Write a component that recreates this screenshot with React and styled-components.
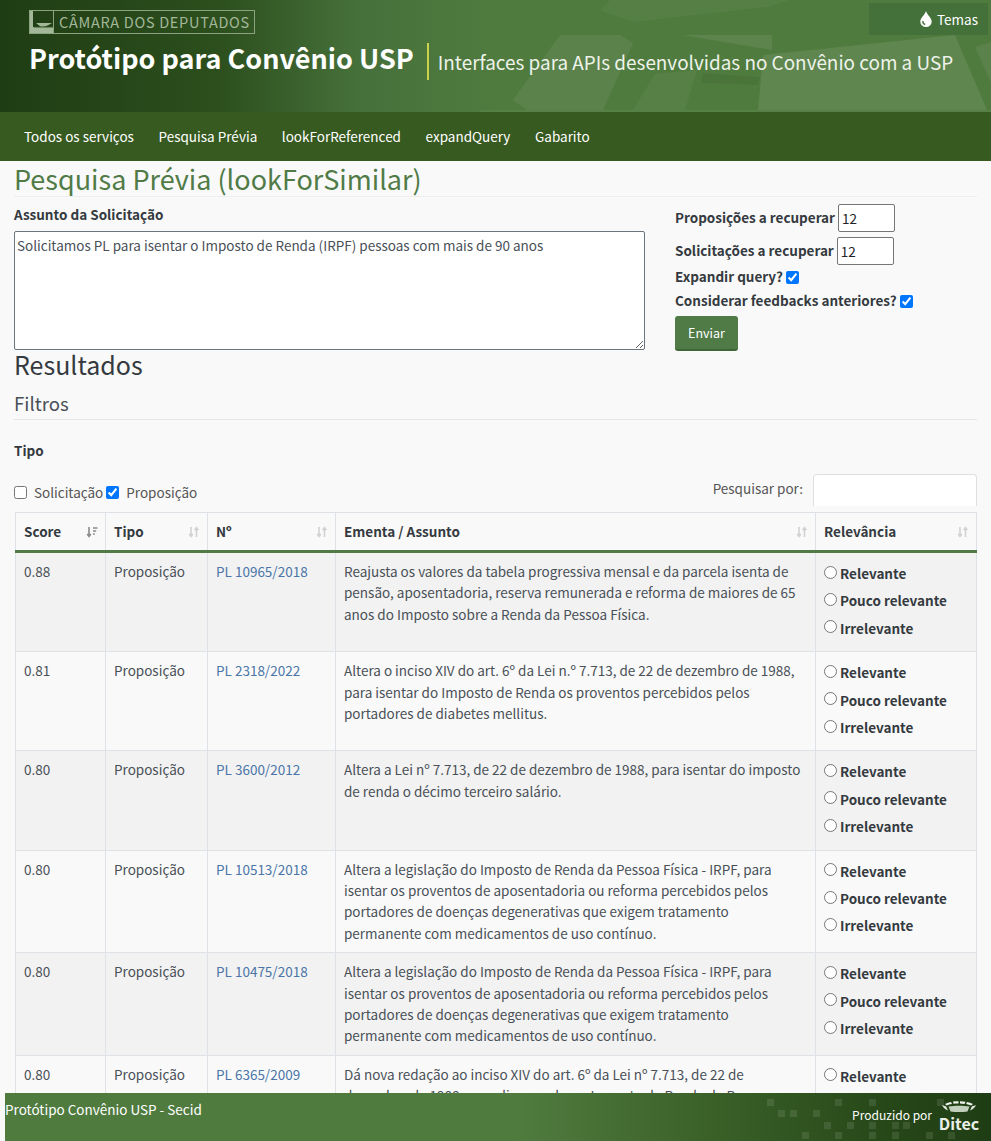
import React from 'react'
import styled, { createGlobalStyle } from 'styled-components'

const FONT = `"Noto Sans CJK SC", "Source Sans Pro", "Noto Sans", sans-serif`

const rows = [
  {
    score: '0.88',
    numero: 'PL 10965/2018',
    ementa:
      'Reajusta os valores da tabela progressiva mensal e da parcela isenta de pensão, aposentadoria, reserva remunerada e reforma de maiores de 65 anos do Imposto sobre a Renda da Pessoa Física.',
  },
  {
    score: '0.81',
    numero: 'PL 2318/2022',
    ementa:
      'Altera o inciso XIV do art. 6º da Lei n.º 7.713, de 22 de dezembro de 1988, para isentar do Imposto de Renda os proventos percebidos pelos portadores de diabetes mellitus.',
  },
  {
    score: '0.80',
    numero: 'PL 3600/2012',
    ementa:
      'Altera a Lei nº 7.713, de 22 de dezembro de 1988, para isentar do imposto de renda o décimo terceiro salário.',
  },
  {
    score: '0.80',
    numero: 'PL 10513/2018',
    ementa:
      'Altera a legislação do Imposto de Renda da Pessoa Física - IRPF, para isentar os proventos de aposentadoria ou reforma percebidos pelos portadores de doenças degenerativas que exigem tratamento permanente com medicamentos de uso contínuo.',
  },
  {
    score: '0.80',
    numero: 'PL 10475/2018',
    ementa:
      'Altera a legislação do Imposto de Renda da Pessoa Física - IRPF, para isentar os proventos de aposentadoria ou reforma percebidos pelos portadores de doenças degenerativas que exigem tratamento permanente com medicamentos de uso contínuo.',
  },
  {
    score: '0.80',
    numero: 'PL 6365/2009',
    ementa:
      'Dá nova redação ao inciso XIV do art. 6º da Lei nº 7.713, de 22 de dezembro de 1988, para dispor sobre o Imposto de Renda da Pessoa Física.',
  },
]

const navItems = ['Todos os serviços', 'Pesquisa Prévia', 'lookForReferenced', 'expandQuery', 'Gabarito']
const relevancias = ['Relevante', 'Pouco relevante', 'Irrelevante']

const footerSquares = [
  [767, 6], [835, 6], [869, 6], [937, 6],
  [778, 17], [790, 17], [813, 17],
  [824, 29], [847, 29], [869, 29], [892, 29], [903, 29],
  [802, 39], [835, 39], [869, 39], [892, 39], [926, 39], [948, 39],
]

const SortIcon = ({ active }) => (
  <StSort viewBox="0 0 12 12" aria-hidden="true">
    <path d="M3 1v9M1.200 8l1.800 2.400L4.800 8" fill="none" stroke={active ? '#8a8a8a' : '#d2d2d2'} strokeWidth="1.600" />
    {active ? (
      <path d="M7 2h4.500M7 5h3.200M7 8h1.800" fill="none" stroke="#8a8a8a" strokeWidth="1.600" />
    ) : (
      <path d="M8.500 11V2M6.700 4l1.800-2.400L10.300 4" fill="none" stroke="#d2d2d2" strokeWidth="1.600" />
    )}
  </StSort>
)

const HeaderShapes = () => (
  <StShapes viewBox="0 0 991 112" preserveAspectRatio="none" aria-hidden="true">
    <g fill="#fff">
      <path fillOpacity="0.035" d="M610 0h180l-23 7-134 15-33-12z" />
      <path fillOpacity="0.06" d="M513 100l47-65h60l13 8-30 67H527z" />
      <path fillOpacity="0.04" d="M633 110l22-36 42-4-12 40z" />
      <path fillOpacity="0.07" d="M682 35h90v15z" />
      <path fillOpacity="0.085" d="M763 55l192-20 32 75H758z" />
      <path fillOpacity="0.06" d="M975 47l16-5v41z" />
      <path fillOpacity="0.04" d="M480 110h511v2H480z" />
    </g>
    <path fill="#000" fillOpacity="0.05" d="M703 73l57 4-2 8-57-2z" />
  </StShapes>
)

const App = () => {
  return (
    <>
      <GlobalStyle />
      <StHeader>
        <HeaderShapes />
        <StLogo>
          <svg width="25" height="24" viewBox="0 0 25 24" aria-hidden="true">
            <path d="M0.500 0.500h24v23H0.500z" fill="none" stroke="#8ba480" />
            <path d="M1 1h3v16h20v6H1z" fill="#a3b799" />
            <path d="M7 13l16 0c-3 2-7 4-11 4z" fill="#a3b799" />
            <path d="M5 17h19" stroke="#2f5222" strokeWidth="1" />
          </svg>
          <span>CÂMARA DOS DEPUTADOS</span>
        </StLogo>
        <StTitleRow>
          <StTitle>Protótipo para Convênio USP</StTitle>
          <StSubtitle>Interfaces para APIs desenvolvidas no Convênio com a USP</StSubtitle>
        </StTitleRow>
        <StThemes>
          <svg width="12" height="16" viewBox="0 0 12 16" aria-hidden="true">
            <path d="M6 0C5.200 3.400.3 7 .3 10.500A5.700 5.500 0 0 0 11.700 10.500C11.700 7 6.800 3.400 6 0z" fill="#fff" />
            <path d="M3 10c-.4 1.900.6 3.100 2.200 3.500" fill="none" stroke="#44703a" strokeWidth="1.400" />
          </svg>
          Temas
        </StThemes>
      </StHeader>

      <StNav>
        {navItems.map((item) => (
          <StNavLink key={item}>{item}</StNavLink>
        ))}
      </StNav>

      <StMain>
        <StPageTitle>Pesquisa Prévia (lookForSimilar)</StPageTitle>
        <StFormRow>
          <StSubject>
            <StBold>Assunto da Solicitação</StBold>
            <StTextarea defaultValue="Solicitamos PL para isentar o Imposto de Renda (IRPF) pessoas com mais de 90 anos" />
          </StSubject>
          <StOptions>
            <StOption>
              <StBold>Proposições a recuperar</StBold>
              <StNumber type="number" defaultValue="12" />
            </StOption>
            <StOption>
              <StBold>Solicitações a recuperar</StBold>
              <StNumber type="number" defaultValue="12" />
            </StOption>
            <StCheckOption>
              <StBold>Expandir query?</StBold>
              <StCheck type="checkbox" defaultChecked />
            </StCheckOption>
            <StCheckOption>
              <StBold>Considerar feedbacks anteriores?</StBold>
              <StCheck type="checkbox" defaultChecked />
            </StCheckOption>
            <StButton>Enviar</StButton>
          </StOptions>
        </StFormRow>

        <StResults>Resultados</StResults>
        <StFilters>Filtros</StFilters>
        <StTipo>Tipo</StTipo>

        <StToolbar>
          <StTipoChecks>
            <StCheckBig type="checkbox" />
            <span>Solicitação</span>
            <StCheckBig type="checkbox" defaultChecked />
            <span>Proposição</span>
          </StTipoChecks>
          <StSearch>
            <span>Pesquisar por:</span>
            <StSearchInput type="text" />
          </StSearch>
        </StToolbar>

        <StTable>
          <colgroup>
            <col style={{ width: 90 }} />
            <col style={{ width: 102 }} />
            <col style={{ width: 128 }} />
            <col style={{ width: 480 }} />
            <col style={{ width: 161 }} />
          </colgroup>
          <thead>
            <tr>
              <StTh>Score<SortIcon active /></StTh>
              <StTh>Tipo<SortIcon /></StTh>
              <StTh>Nº<SortIcon /></StTh>
              <StTh>Ementa / Assunto<SortIcon /></StTh>
              <StTh>Relevância<SortIcon /></StTh>
            </tr>
          </thead>
          <tbody>
            {rows.map((row) => (
              <StRow key={row.numero}>
                <StTd>{row.score}</StTd>
                <StTd>Proposição</StTd>
                <StTd><StLink>{row.numero}</StLink></StTd>
                <StTd>{row.ementa}</StTd>
                <StTd>
                  <StRadioList>
                    {relevancias.map((r) => (
                      <StRadioLine key={r}>
                        <StRadio type="radio" name={row.numero} />
                        {r}
                      </StRadioLine>
                    ))}
                  </StRadioList>
                </StTd>
              </StRow>
            ))}
          </tbody>
        </StTable>
      </StMain>

      <StFooter>
        <StSquares viewBox="5 0 986 48" aria-hidden="true">
          {footerSquares.map(([x, y]) => (
            <rect key={`${x}-${y}`} x={x} y={y} width="7" height="7" />
          ))}
        </StSquares>
        <StFooterText>Protótipo Convênio USP - Secid</StFooterText>
        <StFooterRight>
          <StProduced>Produzido por</StProduced>
          <StDitec>
            <svg width="34" height="13" viewBox="0 0 34 12" aria-hidden="true">
              <path d="M3 3.500C5 2.500 7 1.800 9 1.400l1 2.100C8 3.800 6 4.300 4.800 5zM11 1.100c2-.2 4-.3 5.500-.3v2.200c-1.800 0-3.500 0-5 .2zM18 .8c2 0 4 .2 5.500.5l-1 2.200c-1.400-.3-3-.4-4.500-.5zM25 1.600c2 .4 4 1 6 2L29.200 5c-1.500-.6-3-1-5-1.400z" fill="#f0f4ee" />
              <path d="M0 4.500C1 5 2.500 5.400 4 5.800L6 10c-3-1.200-5-3-6-5.500zM34 4.500c-1 2.500-3 4.300-6 5.500l2-4.200c1.500-.4 3-.8 4-1.300z" fill="#dfe6db" />
              <path d="M6.500 6c6-1 15-1 21 0l-2 5c-5 .8-12 .8-17 0z" fill="#c3cfbd" />
            </svg>
            <span>Ditec</span>
          </StDitec>
        </StFooterRight>
      </StFooter>
    </>
  )
}

export default App

const GlobalStyle = createGlobalStyle`
  * { box-sizing: border-box; }
  html, body { height: 1141px; overflow: hidden; }
  body {
    margin: 0;
    background: #f9f9f9;
    color: #212529;
    font-family: ${FONT};
    font-size: 13.500px;
    line-height: 22px;
  }
`

const StHeader = styled.header`
  position: relative;
  height: 112px;
  padding: 10px 0 0 29px;
  overflow: hidden;
  background: linear-gradient(90deg, #1f3d14 0%, #2c4f1d 22%, #46703a 36%, #507b3f 50%, #507b3f 100%);
`

const StShapes = styled.svg`
  position: absolute;
  inset: 0;
  width: 100%;
  height: 100%;
`

const StLogo = styled.div`
  position: relative;
  display: flex;
  align-items: center;
  width: 226px;
  height: 24px;
  border: 1px solid #8ba480;
  color: #a3b799;
  font-size: 14.500px;
  letter-spacing: 0.700px;
  line-height: 22px;
  white-space: nowrap;

  svg {
    margin: -1px 5px -1px -1px;
    flex: none;
  }
`

const StTitleRow = styled.div`
  position: relative;
  display: flex;
  align-items: center;
  margin-top: 9px;
  height: 37px;
  white-space: nowrap;
  color: #fff;
`

const StTitle = styled.h1`
  margin: 0 0 7px;
  padding-right: 13px;
  font-size: 27px;
  font-weight: 700;
  line-height: 34px;
`

const StSubtitle = styled.div`
  display: flex;
  align-items: center;
  height: 37px;
  padding-left: 9px;
  border-left: 2px solid #c8d24a;
  font-size: 18.900px;
  line-height: 37px;
  color: #eef3ea;
`

const StThemes = styled.div`
  position: absolute;
  top: 3px;
  right: 3px;
  width: 119px;
  height: 32px;
  display: flex;
  align-items: center;
  justify-content: flex-end;
  gap: 5px;
  padding-right: 10px;
  background: #44703a;
  color: #fff;
  font-size: 13.500px;
`

const StNav = styled.nav`
  display: flex;
  align-items: center;
  height: 49px;
  padding: 0 0 2px 24px;
  gap: 24.600px;
  background: #375a20;
`

const StNavLink = styled.a`
  color: #fff;
  font-size: 13.500px;
  line-height: 22px;
`

const StMain = styled.main`
  padding: 0 14px;
`

const StPageTitle = styled.h2`
  margin: 0 0 7px;
  height: 36px;
  border-bottom: 1px solid #eeeeee;
  color: #507b47;
  font-size: 27px;
  font-weight: 400;
  line-height: 35px;
`

const StFormRow = styled.div`
  display: grid;
  grid-template-columns: 631px 1fr;
  column-gap: 30px;
`

const StSubject = styled.div`
  display: flex;
  flex-direction: column;
`

const StBold = styled.span`
  display: block;
  padding-bottom: 2px;
  font-weight: 700;
  font-size: 13.500px;
  line-height: 20px;
  color: #343a40;
`

const StTextarea = styled.textarea`
  width: 631px;
  height: 119px;
  margin-top: 5px;
  padding: 2px;
  border: 1px solid #6c757d;
  border-radius: 2px;
  background: #fff;
  color: #495057;
  font-family: ${FONT};
  font-size: 13.500px;
  line-height: 22px;
`

const StOptions = styled.div`
  display: flex;
  flex-direction: column;
  align-items: flex-start;
`

const StOption = styled.label`
  display: flex;
  align-items: center;
  gap: 3px;
  height: 28px;
  white-space: nowrap;

  & + & {
    margin-top: 5px;
  }
`

const StCheckOption = styled.label`
  display: flex;
  align-items: center;
  gap: 3px;
  height: 24px;
  white-space: nowrap;
`

const StNumber = styled.input`
  width: 57px;
  height: 28px;
  padding: 1px 3px;
  border: 1px solid #767676;
  border-radius: 2px;
  background: #fff;
  color: #212529;
  font-family: ${FONT};
  font-size: 13.500px;
  appearance: textfield;
`

const StCheck = styled.input`
  width: 13px;
  height: 13px;
  margin: 0;
  accent-color: #0075ff;
`

const StButton = styled.button`
  margin-top: 3px;
  width: 63px;
  height: 35px;
  border: none;
  border-bottom: 2px solid #3f6637;
  border-radius: 3px;
  background: #507b47;
  color: #fff;
  font-family: ${FONT};
  font-size: 12.500px;
`

const StResults = styled.h3`
  margin: 0;
  height: 30px;
  font-size: 25px;
  font-weight: 400;
  line-height: 26px;
  color: #343a40;
`

const StFilters = styled.h4`
  margin: 9px 0 0;
  height: 30px;
  border-bottom: 1px solid #e5e5e5;
  font-size: 18.600px;
  font-weight: 400;
  line-height: 26px;
  color: #495057;
`

const StTipo = styled.div`
  margin-top: 19px;
  font-weight: 700;
  line-height: 22px;
  color: #343a40;
`

const StToolbar = styled.div`
  display: flex;
  align-items: flex-start;
  justify-content: space-between;
  height: 39px;
  margin-top: 12px;
`

const StTipoChecks = styled.div`
  display: flex;
  align-items: center;
  height: 22px;
  margin-top: 8px;
  color: #555;

  span {
    margin-right: 3px;
  }
`

const StCheckBig = styled.input`
  width: 13px;
  height: 13px;
  margin: 0 7px 0 0;
  accent-color: #0075ff;
`

const StSearch = styled.div`
  display: flex;
  align-items: flex-start;
  gap: 10px;
  color: #555;

  span {
    margin-top: 4px;
  }
`

const StSearchInput = styled.input`
  width: 164px;
  height: 32px;
  margin-top: 1px;
  border: 1px solid #dfdfdf;
  border-bottom: none;
  border-radius: 4px 4px 0 0;
  background: #fff;
`

const StTable = styled.table`
  width: 962px;
  margin-left: 1px;
  table-layout: fixed;
  border-collapse: collapse;
`

const StTh = styled.th`
  position: relative;
  height: 39px;
  padding: 0 8px 2px;
  border: 1px solid #dee2e6;
  border-bottom: 3px solid #507b47;
  text-align: left;
  font-size: 13.500px;
  font-weight: 700;
  color: #343a40;
`

const StSort = styled.svg`
  position: absolute;
  top: 13px;
  right: 7px;
  width: 12px;
  height: 12px;
`

const StRow = styled.tr`
  &:nth-child(odd) td {
    background: #f2f2f2;
  }
`

const StTd = styled.td`
  padding: 8px 8px 8px;
  border: 1px solid #dee2e6;
  vertical-align: top;
  font-size: 13.500px;
  line-height: 21.400px;
  color: #495057;
`

const StLink = styled.a`
  color: #4a75a8;
`

const StRadioList = styled.div`
  margin: -1px 0 1px;
`

const StRadioLine = styled.label`
  display: flex;
  align-items: center;
  height: 27.400px;
  font-weight: 700;
  color: #343a40;
  white-space: nowrap;
`

const StRadio = styled.input`
  width: 13px;
  height: 13px;
  margin: 0 3px 3px 0;
`

const StFooter = styled.footer`
  position: fixed;
  left: 5px;
  right: 0;
  bottom: 0;
  height: 48px;
  display: flex;
  justify-content: space-between;
  background: linear-gradient(90deg, #507b3f 0%, #507b3f 52%, #3a6028 72%, #264718 90%, #1f3d14 100%);
  color: #fff;
`

const StSquares = styled.svg`
  position: absolute;
  inset: 0;
  width: 100%;
  height: 100%;

  rect {
    fill: #fff;
    fill-opacity: 0.1;
  }
`

const StFooterText = styled.div`
  position: relative;
  padding-top: 5px;
  line-height: 22px;
`

const StFooterRight = styled.div`
  position: relative;
  display: flex;
  align-items: center;
  gap: 8px;
  padding-right: 13px;
`

const StProduced = styled.span`
  font-size: 12px;
  margin-bottom: 4px;
`

const StDitec = styled.div`
  display: flex;
  flex-direction: column;
  align-items: center;
  width: 38px;
  font-size: 16px;
  font-weight: 700;
  line-height: 21px;
  color: #e9eee6;

  svg {
    display: block;
  }
`
